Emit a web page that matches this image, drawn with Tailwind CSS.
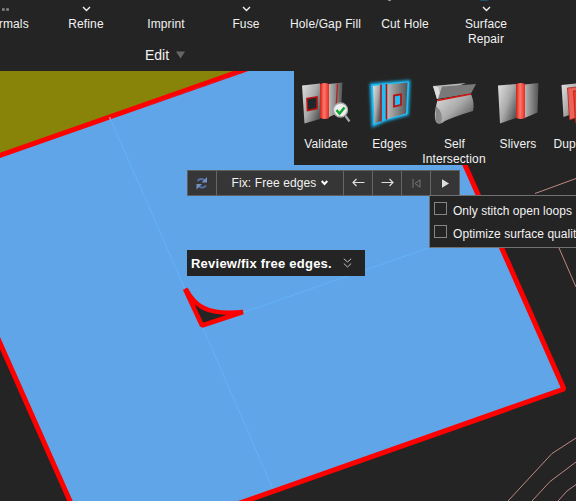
<!DOCTYPE html>
<html lang="en">
<head>
<meta charset="utf-8">
<title>Edges</title>
<script src="https://cdn.jsdelivr.net/npm/@tailwindcss/browser@4"></script>
</head>
<body class="h-[501px] w-[576px] overflow-hidden bg-[#242424] font-['Liberation_Sans',Arial,sans-serif] text-[12px] leading-[15px] text-[#f2f2f2]">
<div class="relative flex h-[501px] w-[576px] flex-col overflow-hidden">
  <!-- Ribbon -->
  <header class="relative h-[71px] w-full shrink-0 overflow-hidden bg-[#242424]">
    <div class="-ml-[34px] flex w-[640px] tracking-[0.12px] text-center">
      <div class="w-20 shrink-0"><svg class="block h-[17px] w-20" viewBox="0 0 80 17"><path d="M36 8.300h2.700v2.500H36zM40.200 8.300h2.700v2.500h-2.700z" fill="#858585"/></svg>Normals</div>
      <div class="w-20 shrink-0"><svg class="block h-[17px] w-20" viewBox="0 0 80 17"><path d="M37 7l3.500 3.500L44 7" fill="none" stroke="#eee" stroke-width="1.400"/></svg>Refine</div>
      <div class="w-20 shrink-0 pt-[17px]">Imprint</div>
      <div class="w-20 shrink-0"><svg class="block h-[17px] w-20" viewBox="0 0 80 17"><path d="M37 7l3.500 3.500L44 7" fill="none" stroke="#eee" stroke-width="1.400"/></svg>Fuse</div>
      <div class="w-[79px] shrink-0 whitespace-nowrap pt-[17px]">Hole/Gap Fill</div>
      <div class="w-20 shrink-0"><svg class="block h-[17px] w-20" viewBox="0 0 80 17"><path d="M22.500 0h4l-2 1.200z" fill="#aaa"/></svg>Cut Hole</div>
      <div class="w-[82px] shrink-0"><svg class="block h-[17px] w-[82px]" viewBox="0 0 82 17"><ellipse cx="39" cy="-1" rx="6" ry="2" fill="#1c526c"/><path d="M38 7l3.500 3.500L45 7" fill="none" stroke="#eee" stroke-width="1.400"/></svg>Surface<br>Repair</div>
    </div>
    <div class="absolute left-[145px] top-[47px] flex items-center gap-[7px] text-[14px] leading-4"><span>Edit</span><svg class="h-2 w-[9px]" viewBox="0 0 9 8"><path d="M0 .5h9L4.500 7.500z" fill="#666"/></svg></div>
  </header>

  <!-- Model viewport -->
  <main class="relative h-[430px] w-full">
    <svg class="block h-[430px] w-[576px]" viewBox="0 71 576 430">
      <path d="M0 155.500L241 71H465V165L564 389L246 501H70L0 343z" fill="#60a5e8"/>
      <path d="M0 71H241L0 155.500z" fill="#878409"/>
      <path d="M110 118L185 289M202 326L273 489M243 312.500L430 247.500" stroke="#62b2fb" stroke-width="1" fill="none"/>
      <g fill="none" stroke="#f00" stroke-width="5">
        <path d="M-3 156.500L248 68.500M-3 336.300L73 507.800M420 63.200L564 389L230 506.500" stroke-linejoin="bevel"/>
        <path d="M185.500 288.500C194 304 204 316 243 312L202 325.500L185 289" fill="#242424" stroke-width="4.500" stroke-linejoin="bevel"/>
      </g>
      <path d="M110 117v2.500" stroke="#b9dcff"/>
      <path d="M145 106.500L241 72.500" stroke="#cc2448" stroke-width=".8" stroke-dasharray="9 4"/>
      <path d="M535 193.500L576 178.500M559 248L576 287M508 501L552 453.500L576 438M532 501L550 481.500L576 462M558 501L567 491L576 484.500" fill="none" stroke="#bd8984" stroke-width="1"/>
    </svg>

    <!-- Tool flyout -->
    <section class="absolute left-[294px] top-0 flex h-[94px] w-[282px] overflow-hidden bg-[#242424] text-center tracking-[0.12px]">
      <div class="w-16 shrink-0">
        <svg class="block h-[66px] w-16" viewBox="294 71 64 66">
          <defs>
            <linearGradient id="m" x2="1" y2=".8"><stop stop-color="#e0e0e0"/><stop offset=".55" stop-color="#aaa"/><stop offset="1" stop-color="#555"/></linearGradient>
            <linearGradient id="d" x2="1"><stop stop-color="#b8b8b8"/><stop offset="1" stop-color="#555"/></linearGradient>
            <linearGradient id="r" x2="1"><stop stop-color="#cf2018"/><stop offset=".45" stop-color="#ff796b"/><stop offset="1" stop-color="#e62b20"/></linearGradient>
          </defs>
          <path d="M302 85.500L320 83.500V119L304.500 123.500z" fill="url(#m)"/>
          <path d="M329 84L342.500 82.500L341 112L329 117z" fill="url(#d)"/>
          <path d="M320 84q5-2 9 0v34q-4 2-9 0z" fill="url(#r)"/>
          <path d="M337.500 83.500L336 110" stroke="#b8221e" stroke-width="1.300"/>
          <path d="M307 98.500l10-1.500v11.500l-9.500 2z" fill="#20272a" stroke="#b71210" stroke-width="1.600"/>
          <path d="M345.500 116L349.500 121.500" stroke="#aaa" stroke-width="2.200"/>
          <circle cx="340.500" cy="110" r="7" fill="#eee" stroke="#aaa" stroke-width="1.300"/>
          <path d="M336.500 110l3 3.500l5-6" fill="none" stroke="#12a431" stroke-width="2.500"/>
        </svg>
        Validate
      </div>
      <div class="w-16 shrink-0">
        <svg class="block h-[66px] w-16" viewBox="358 71 64 66">
          <defs><filter id="g" x="-30%" y="-30%" width="160%" height="160%"><feGaussianBlur stdDeviation="1.700"/></filter></defs>
          <path d="M371.500 85L408.500 82L407 114L386 119.500L373.500 125z" fill="#16b8f4" stroke="#16b8f4" stroke-width="3.500" filter="url(#g)"/>
          <path d="M371.800 85L408.500 82L407 114L386 119.500L373.800 124.500z" fill="#21bdf6" stroke="#21bdf6"/>
          <path d="M373 86l7-.8V121.500l-5.500 2z" fill="url(#m)"/>
          <path d="M387 84.500L407.500 82.500L406 113.500L387 119z" fill="url(#d)"/>
          <path d="M381 84.500V121.500M386.500 84V119.500" stroke="#ad1512" stroke-width="1.600"/>
          <path d="M394 95.500l7-1.200v10.500l-7 1.700z" fill="#21bdf6" stroke="#b71210" stroke-width="1.800"/>
        </svg>
        <span class="-ml-px">Edges</span>
      </div>
      <div class="w-16 shrink-0 overflow-hidden">
        <svg class="block h-[66px] w-16" viewBox="422 71 64 66">
          <path d="M433 86L466 83l-8 3L437 99z" fill="#bbb"/>
          <path d="M437 99L433 86l5 1l3 10z" fill="#ddd"/>
          <path d="M437.500 100L471 94Q475 104 473 111Q456 116 445 121Q439 126 436 122Q433 116 437.500 100z" fill="url(#m)"/>
          <path d="M436 106Q444 113 441 123Q437 125 435.500 119z" fill="#888"/>
          <path d="M442 86.500L476 84L471 93.500L438 99z" fill="#797979"/>
          <path d="M437.500 100.500L471 94" stroke="#d51512" stroke-width="1.500"/>
        </svg>
        <div class="w-[70px]"><span class="mr-[5px]">Self</span><br>Intersections</div>
      </div>
      <div class="w-16 shrink-0">
        <svg class="block h-[66px] w-16" viewBox="486 71 64 66">
          <path d="M498 85.500L516 84V118L500 123.500z" fill="url(#m)"/>
          <path d="M524.500 84.500L538.500 83L537.500 112.500L524.500 118z" fill="url(#d)"/>
          <path d="M516 84q5-2 9 0v34q-4 2-9 0z" fill="url(#r)"/>
        </svg>
        Slivers
      </div>
      <div class="w-16 shrink-0">
        <svg class="block h-[66px] w-16" viewBox="550 71 64 66">
          <path d="M561.500 85l20-2v28l-18 6z" fill="url(#m)"/>
          <path d="M567.500 88l20-2v28l-18 6z" fill="#ed6156" stroke="#9c1b16" stroke-width=".7"/>
          <path d="M573.500 91l20-2v30l-18 4z" fill="#f43c30" stroke="#9c1b16" stroke-width=".7"/>
        </svg>
        Duplicates
      </div>
    </section>

    <!-- Navigation bar -->
    <nav class="absolute left-[187px] top-[99px] flex h-[26px] w-[273px] border border-[#5d605f] bg-[#363636]">
      <div class="flex w-[29px] items-center justify-center border-r border-[#666]">
        <svg class="h-4 w-4" viewBox="0 0 16 16" fill="none"><path d="M3.500 6Q6 2.500 10.500 5" stroke="#5470a8" stroke-width="2"/><path d="M12 10.500Q9.500 14 5 11.500" stroke="#5470a8" stroke-width="2"/><path d="M13 2v5.500H7.500zM2.500 14.500V9H8z" fill="#7690c6"/></svg>
      </div>
      <div class="flex w-[127px] items-center justify-center gap-[5px] border-r border-[#666] tracking-[0.100px]"><span class="whitespace-nowrap pt-px">Fix: Free edges</span><svg class="h-2 w-[7px]" viewBox="0 0 7 8"><path d="M.7 2L3.500 5L6.300 2" fill="none" stroke="#fff" stroke-width="2"/></svg></div>
      <div class="flex w-[29px] items-center justify-center border-r border-[#666]"><svg class="h-3 w-[13px]" viewBox="0 0 13 12"><path d="M12.500 5.500H1M4.500 2L1 5.500L4.500 9" fill="none" stroke="#ddd" stroke-width="1.200"/></svg></div>
      <div class="flex w-[29px] items-center justify-center border-r border-[#666]"><svg class="h-3 w-[13px]" viewBox="0 0 13 12"><path d="M.5 5.500h11.500M8.500 2L12 5.500L8.500 9" fill="none" stroke="#ddd" stroke-width="1.200"/></svg></div>
      <div class="flex w-[29px] items-center justify-center border-r border-[#666]"><svg class="h-[9px] w-[9px]" viewBox="0 0 9 9"><path d="M1 0v9M8 .8v7.400L3 4.500z" fill="none" stroke="#777"/></svg></div>
      <div class="flex w-7 items-center justify-center"><svg class="h-[9px] w-[7px]" viewBox="0 0 7 9"><path d="M0 .3l7 4.200l-7 4.200z" fill="#ddd"/></svg></div>
    </nav>

    <!-- Options -->
    <div class="absolute left-[429px] top-[124px] flex h-[53px] w-[160px] flex-col gap-[10px] border border-[#707070] bg-[#242424] pl-1 pt-[6px]">
      <div class="flex h-[13px] items-center gap-[6px] whitespace-nowrap"><span class="h-[13px] w-[13px] shrink-0 border border-[#858585]"></span><span class="pt-[5px] tracking-[0.040px]">Only stitch open loops</span></div>
      <div class="flex h-[13px] items-center gap-[6px] whitespace-nowrap"><span class="h-[13px] w-[13px] shrink-0 border border-[#858585]"></span><span class="pt-[5px] tracking-[0.060px]">Optimize surface quality</span></div>
    </div>

    <!-- Guidance -->
    <div class="absolute left-[187px] top-[179px] flex h-[26px] w-[178px] items-center bg-[#242424] pl-1 text-[13px] font-bold">
      <span class="whitespace-nowrap pt-px tracking-[0.230px] text-white">Review/fix free edges.</span>
      <svg class="ml-[11px] h-[10px] w-[9px]" viewBox="0 0 9 10"><path d="M.8 .8L4.500 4L8.200 .8M.8 5.500L4.500 9L8.200 5.500" fill="none" stroke="#c2c2c2"/></svg>
    </div>
  </main>
</div>
</body>
</html>
